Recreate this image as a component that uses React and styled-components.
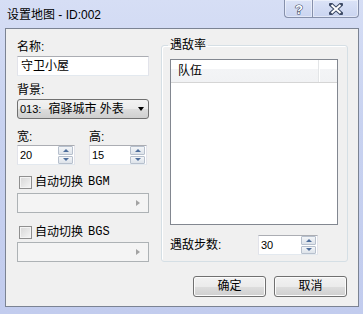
import React from "react";
import styled, { createGlobalStyle } from "styled-components";

const GlobalStyle = createGlobalStyle`
  html, body {
    margin: 0;
    padding: 0;
    background: #fff;
  }
  body {
    font-family: "Liberation Sans", "Noto Sans CJK SC", sans-serif;
    font-size: 12px;
    color: #000;
  }
`;

const Window = styled.div`
  width: 363px;
  height: 314px;
  box-sizing: border-box;
  display: flex;
  flex-direction: column;
  background: linear-gradient(to bottom, #d6def5 0%, #c8d2f0 40%, #c2ccee 100%);
`;

const TitleBar = styled.div`
  height: 28px;
  display: flex;
  align-items: flex-start;
`;

const Title = styled.div`
  margin: 8px 0 0 7px;
  line-height: 14px;
  font-size: 12px;
`;

const Caption = styled.div`
  margin-left: auto;
  margin-right: 4px;
  display: flex;
`;

const CaptionButton = styled.div`
  width: ${(p) => p.$w}px;
  height: 18px;
  box-sizing: border-box;
  border: 1px solid #8690ab;
  border-top: none;
  ${(p) => (p.$first ? "border-bottom-left-radius: 4px; border-right: none;" : "border-bottom-right-radius: 4px;")}
  background: linear-gradient(to bottom, #dbe3f7, #cad4f0);
  box-shadow: inset 0 0 0 1px rgba(255, 255, 255, 0.45);
  display: flex;
  align-items: center;
  justify-content: center;
`;

const Client = styled.div`
  flex: 1;
  margin: 0 4px 7px 5px;
  border: 1px solid #7b8393;
  background: #f0f0f0;
  display: flex;
  flex-direction: column;
`;

const Body = styled.div`
  display: flex;
  gap: 12px;
  padding: 11px 10px 0 11px;
`;

const LeftColumn = styled.div`
  width: 132px;
  display: flex;
  flex-direction: column;
`;

const Label = styled.div`
  height: 14px;
  line-height: 14px;
  margin-top: ${(p) => p.$mt || 0}px;
  margin-bottom: ${(p) => (p.$mb === undefined ? 2 : p.$mb)}px;
`;

const TextBox = styled.div`
  height: 20px;
  box-sizing: border-box;
  background: #fff;
  border: 1px solid #e2e3ea;
  border-top-color: #abadb3;
  border-bottom-color: #e3e9ef;
  padding-left: 3px;
  line-height: 18px;
  font-size: 12px;
`;

const Select = styled.div`
  height: 20px;
  margin-top: ${(p) => p.$mt || 0}px;
  box-sizing: border-box;
  border: 1px solid #707070;
  border-radius: 3px;
  background: linear-gradient(to bottom, #f2f2f2 0%, #ebebeb 50%, #dddddd 51%, #cfcfcf 100%);
  display: flex;
  align-items: center;
  padding: 0 4px 0 2px;
  line-height: 18px;
  white-space: nowrap;
`;

const Num = styled.span`
  font-family: "Liberation Sans", sans-serif;
  font-size: 11px;
  margin-right: 7px;
`;

const DownArrow = styled.span`
  margin-left: auto;
  width: 0;
  height: 0;
  border-left: 3.5px solid transparent;
  border-right: 3.5px solid transparent;
  border-top: 4px solid #000;
`;

const DisabledCombo = styled.div`
  height: 20px;
  box-sizing: border-box;
  border: 1px solid #adb2b5;
  background: #f4f4f4;
  display: flex;
  align-items: center;
  justify-content: flex-end;
  padding-right: 8px;
`;

const RightArrow = styled.span`
  width: 0;
  height: 0;
  border-top: 3.5px solid transparent;
  border-bottom: 3.5px solid transparent;
  border-left: 4px solid #a3a3a3;
`;

const SpinGrid = styled.div`
  margin-top: 11px;
  display: grid;
  grid-template-columns: 58px 58px;
  column-gap: 14px;
`;

const SpinField = styled.div`
  display: flex;
  flex-direction: column;
`;

const Spinner = styled.div`
  width: ${(p) => p.$w || 58}px;
  height: 20px;
  box-sizing: border-box;
  background: #fff;
  border: 1px solid #e2e3ea;
  border-top-color: #abadb3;
  border-bottom-color: #e3e9ef;
  display: flex;
  align-items: stretch;
`;

const SpinValue = styled.div`
  flex: 1;
  padding-left: 2px;
  line-height: 18px;
  font-family: "Liberation Sans", sans-serif;
  font-size: 11px;
`;

const SpinButtons = styled.div`
  width: 15px;
  display: flex;
  flex-direction: column;
  gap: 1px;
  padding: 0 1px 0 0;
`;

const SpinBtn = styled.div`
  flex: 1;
  box-sizing: border-box;
  border: 1px solid #b7c0cd;
  border-radius: 1px;
  background: linear-gradient(to bottom, #f3f5f8, #dde3ea);
  display: flex;
  align-items: center;
  justify-content: center;
  &::after {
    content: "";
    width: 0;
    height: 0;
    border-left: 3px solid transparent;
    border-right: 3px solid transparent;
    ${(p) => (p.$up ? "border-bottom: 3px solid #4e6e9c;" : "border-top: 3px solid #4e6e9c;")}
  }
`;

const CheckRow = styled.div`
  height: 14px;
  margin-top: ${(p) => p.$mt}px;
  margin-bottom: ${(p) => p.$mb}px;
  display: flex;
  align-items: center;
  gap: 3px;
  padding-left: 2px;
  line-height: 14px;
  white-space: nowrap;
`;

const CheckBox = styled.span`
  width: 13px;
  height: 13px;
  box-sizing: border-box;
  border: 1px solid #8f8f8f;
  background: linear-gradient(135deg, #d6d6d6, #f6f6f6);
  box-shadow: inset 0 0 0 1px #f4f4f4;
`;

const Tag = styled.span`
  font-family: "Liberation Mono", monospace;
  font-size: 12px;
  margin-left: 2px;
`;

const GroupBox = styled.fieldset`
  width: 187px;
  box-sizing: border-box;
  margin: -2px 0 0;
  padding: 0;
  border: 1px solid #d5dfe5;
  border-radius: 3px;
  box-shadow: inset 1px 1px 0 #fff;
`;

const Legend = styled.legend`
  margin-left: 6px;
  padding: 0 2px;
  line-height: 14px;
  font-size: 12px;
`;

const GroupInner = styled.div`
  padding: 7px 9px 4px 8px;
`;

const ListBox = styled.div`
  height: 166px;
  box-sizing: border-box;
  border: 1px solid #828790;
  background: #fff;
`;

const ListHeader = styled.div`
  height: 23px;
  box-sizing: border-box;
  display: flex;
  border-bottom: 1px solid #d5d5d5;
  background: linear-gradient(to bottom, #ffffff 0%, #ffffff 40%, #f3f4f6 41%, #f1f2f4 100%);
`;

const HeaderCell = styled.div`
  width: ${(p) => p.$w}px;
  box-sizing: border-box;
  padding-left: 7px;
  line-height: 22px;
  border-right: 1px solid #e3e5e7;
  box-shadow: 1px 0 0 #fff;
`;

const StepRow = styled.div`
  margin-top: 10px;
  display: flex;
  align-items: center;
`;

const StepLabel = styled.div`
  width: 88px;
  line-height: 14px;
`;

const Footer = styled.div`
  margin-top: 14px;
  padding-right: 11px;
  display: flex;
  justify-content: flex-end;
  gap: 8px;
`;

const Button = styled.div`
  width: 73px;
  height: 21px;
  box-sizing: border-box;
  border: 1px solid #707070;
  border-radius: 3px;
  background: linear-gradient(to bottom, #f2f2f2 0%, #ebebeb 50%, #dddddd 51%, #cfcfcf 100%);
  box-shadow: inset 0 0 0 1px #fcfcfc;
  text-align: center;
  line-height: 19px;
`;

const HelpIcon = () => (
  <svg width="12" height="14" viewBox="0 0 12 14">
    <text
      x="6"
      y="12"
      textAnchor="middle"
      fontFamily="Liberation Sans, sans-serif"
      fontWeight="bold"
      fontSize="13"
      fill="#fff"
      stroke="#3d4a66"
      strokeWidth="1.2"
      paintOrder="stroke"
    >
      ?
    </text>
  </svg>
);

const CloseIcon = () => (
  <svg width="14" height="12" viewBox="0 0 14 12">
    <path d="M2 1.5 L12 10.5 M12 1.5 L2 10.5" stroke="#3d4a66" strokeWidth="4" strokeLinecap="square" />
    <path d="M2.5 2 L11.5 10 M11.5 2 L2.5 10" stroke="#fff" strokeWidth="2" />
  </svg>
);

const SpinBox = ({ value, w }) => (
  <Spinner $w={w}>
    <SpinValue>{value}</SpinValue>
    <SpinButtons>
      <SpinBtn $up />
      <SpinBtn />
    </SpinButtons>
  </Spinner>
);

export default function App() {
  return (
    <>
      <GlobalStyle />
      <Window>
        <TitleBar>
          <Title>设置地图 - ID:002</Title>
          <Caption>
            <CaptionButton $w={28} $first>
              <HelpIcon />
            </CaptionButton>
            <CaptionButton $w={47}>
              <CloseIcon />
            </CaptionButton>
          </Caption>
        </TitleBar>
        <Client>
          <Body>
            <LeftColumn>
              <Label>名称:</Label>
              <TextBox>守卫小屋</TextBox>
              <Label $mt={7}>背景:</Label>
              <Select>
                <Num>013:</Num>宿驿城市 外表
                <DownArrow />
              </Select>
              <SpinGrid>
                <SpinField>
                  <Label $mb={1}>宽:</Label>
                  <SpinBox value="20" />
                </SpinField>
                <SpinField>
                  <Label $mb={1}>高:</Label>
                  <SpinBox value="15" />
                </SpinField>
              </SpinGrid>
              <CheckRow $mt={10} $mb={4}>
                <CheckBox />
                自动切换<Tag>BGM</Tag>
              </CheckRow>
              <DisabledCombo>
                <RightArrow />
              </DisabledCombo>
              <CheckRow $mt={12} $mb={3}>
                <CheckBox />
                自动切换<Tag>BGS</Tag>
              </CheckRow>
              <DisabledCombo>
                <RightArrow />
              </DisabledCombo>
            </LeftColumn>
            <GroupBox>
              <Legend>遇敌率</Legend>
              <GroupInner>
                <ListBox>
                  <ListHeader>
                    <HeaderCell $w={148}>队伍</HeaderCell>
                  </ListHeader>
                </ListBox>
                <StepRow>
                  <StepLabel>遇敌步数:</StepLabel>
                  <SpinBox value="30" w={60} />
                </StepRow>
              </GroupInner>
            </GroupBox>
          </Body>
          <Footer>
            <Button>确定</Button>
            <Button>取消</Button>
          </Footer>
        </Client>
      </Window>
    </>
  );
}
